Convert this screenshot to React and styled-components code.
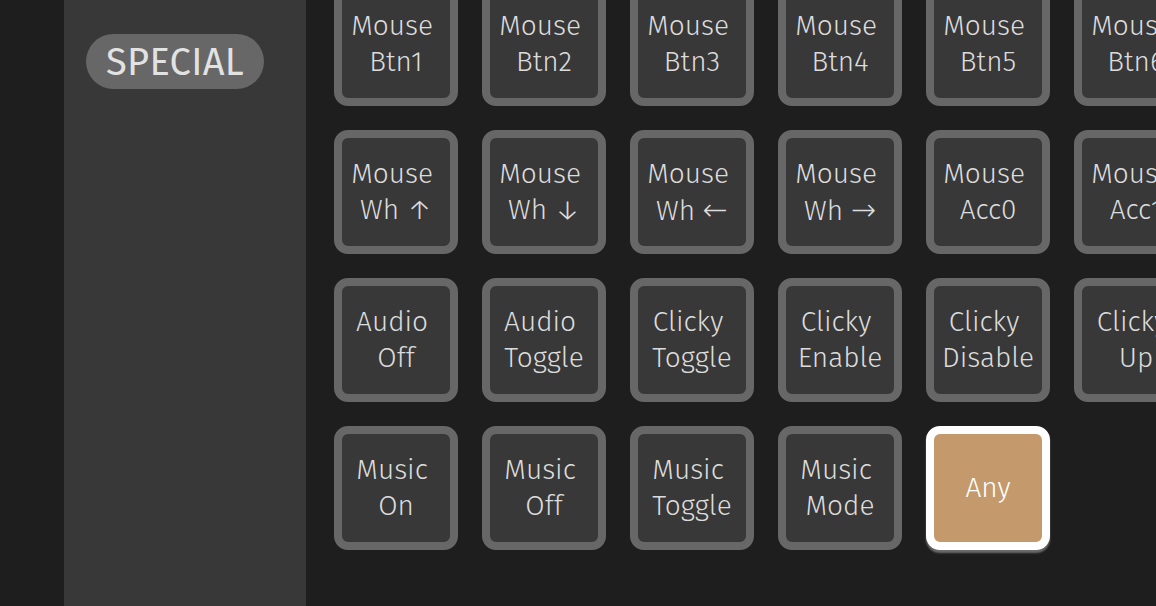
import { styled, createGlobalStyle } from "styled-components";

const GlobalStyle = createGlobalStyle`
  html, body {
    margin: 0;
    padding: 0;
    background: #1e1e1e;
    overflow: hidden;
  }
  body {
    font-family: "Fira Sans", "Noto Sans", "Open Sans", sans-serif;
  }
`;

// first line keeps its trailing space, which nudges it left like the original
const rows = [
  [
    ["Mouse ", "Btn1"],
    ["Mouse ", "Btn2"],
    ["Mouse ", "Btn3"],
    ["Mouse ", "Btn4"],
    ["Mouse ", "Btn5"],
    ["Mouse ", "Btn6"],
  ],
  [
    ["Mouse ", "Wh ", "\u2191"],
    ["Mouse ", "Wh ", "\u2193"],
    ["Mouse ", "Wh ", "\u2190", true],
    ["Mouse ", "Wh ", "\u2192", true],
    ["Mouse ", "Acc0"],
    ["Mouse ", "Acc1"],
  ],
  [
    ["Audio ", "Off"],
    ["Audio ", "Toggle"],
    ["Clicky ", "Toggle"],
    ["Clicky ", "Enable"],
    ["Clicky ", "Disable"],
    ["Clicky ", "Up"],
  ],
  [
    ["Music ", "On"],
    ["Music ", "Off"],
    ["Music ", "Toggle"],
    ["Music ", "Mode"],
  ],
];

export default function App() {
  return (
    <>
      <GlobalStyle />
      <Page>
        <Rail />
        <Sidebar>
          <Pill>SPECIAL</Pill>
        </Sidebar>
        <Main>
          <Grid>
            {rows.flat().map(([top, bottom, arrow, wide], i) => (
              <Key key={i}>
                <span>{top}</span>
                <span>
                  {bottom}
                  {arrow && <Arrow $wide={wide}>{arrow}</Arrow>}
                </span>
              </Key>
            ))}
            <Key $selected>
              <span>Any</span>
            </Key>
          </Grid>
        </Main>
      </Page>
    </>
  );
}

const Page = styled.div`
  display: flex;
  width: 1156px;
  height: 606px;
  overflow: hidden;
  background: #1e1e1e;
`;

const Rail = styled.div`
  width: 64px;
  flex-shrink: 0;
`;

const Sidebar = styled.div`
  width: 242px;
  flex-shrink: 0;
  background: #383838;
  padding: 34px 0 0 22px;
  box-sizing: border-box;
`;

const Pill = styled.div`
  display: inline-flex;
  align-items: center;
  justify-content: center;
  width: 178px;
  height: 55px;
  border-radius: 28px;
  background: #676767;
  color: #e2e2e2;
  font-size: 38px;
  font-weight: 400;
  letter-spacing: 0.3px;
`;

const Main = styled.div`
  flex: 1;
  overflow: hidden;
  padding-left: 28px;
`;

const Grid = styled.div`
  display: grid;
  grid-template-columns: repeat(6, 124px);
  gap: 24px;
  margin-top: -18px;
  width: max-content;
`;

const Key = styled.div`
  width: 124px;
  height: 124px;
  box-sizing: border-box;
  border: 8px solid ${(p) => (p.$selected ? "#ffffff" : "#676767")};
  border-radius: 14px;
  background: ${(p) => (p.$selected ? "#c49a6c" : "#383838")};
  color: ${(p) => (p.$selected ? "#ffffff" : "#dcdcdc")};
  box-shadow: ${(p) => (p.$selected ? "0 3px 2px rgba(140,140,140,0.7)" : "none")};
  display: flex;
  flex-direction: column;
  align-items: center;
  justify-content: center;
  font-size: 28px;
  font-weight: 300;
  line-height: 36px;
  text-align: center;
  white-space: pre;
`;

const Arrow = styled.span`
  font-family: ${(p) => (p.$wide ? '"DejaVu Sans", sans-serif' : "inherit")};
  font-size: ${(p) => (p.$wide ? "30px" : "inherit")};
  font-weight: ${(p) => (p.$wide ? 200 : "inherit")};
`;
